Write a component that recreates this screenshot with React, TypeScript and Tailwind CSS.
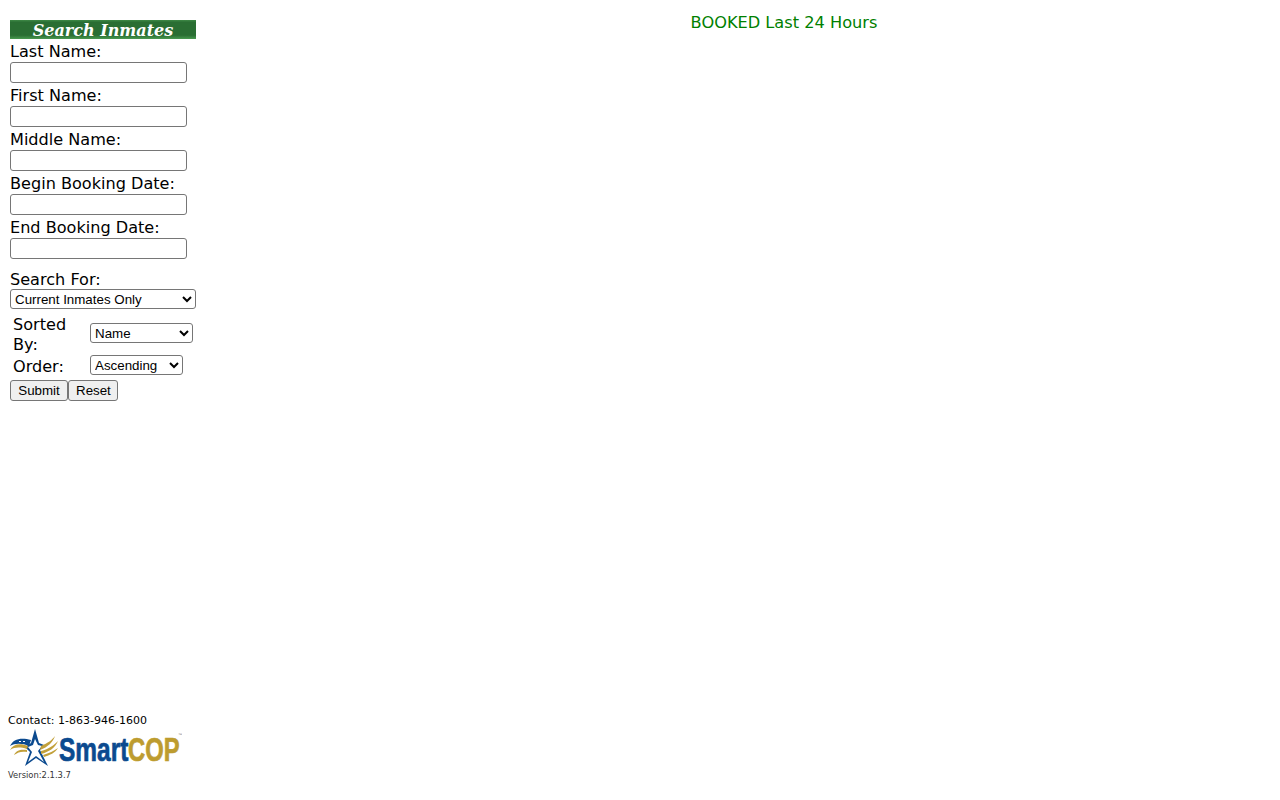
const labelCls = "block h-[22px] text-[16.1px] leading-[22px] text-black";
const inputCls = "block h-[21px] w-[177px] rounded-[3px] border border-[#767676] bg-white";
const selectCls = "block h-[20px] rounded-[3px] border border-[#767676] bg-white pl-0 text-[13.33px] text-black font-['Liberation_Sans',sans-serif]";
const btnCls = "h-[21px] rounded-[3px] border border-[#767676] bg-[#efefef] px-[7px] text-[13.33px] leading-[17px] text-black font-['Liberation_Sans',sans-serif]";

function Field({ label }: { label: string }) {
  return (
    <div className="h-[44px]">
      <label className={`${labelCls} translate-y-[1px]`}>{label}</label>
      <input type="text" className={inputCls} />
    </div>
  );
}

function Logo() {
  return (
    <svg width="174" height="40" viewBox="0 1 174 40" className="block">
      {/* star */}
      <path d="M27 1 L31 15 L36 17 L32 22 L40 38 L28 30 L17 38 L22 24 L17 19 L23 15 Z" fill="#0b4a8f" />
      <path d="M27 11 L30 17 L34 18 L30 23 L36 34 L28 28 L20 34 L24 24 L20 19 L25 17 Z" fill="#ffffff" />
      {/* left wing */}
      <path d="M2 18 C5 11 13 9 23 12 L21 18 C14 15 7 15 2 18 Z" fill="#0b4a8f" />
      <path d="M11 13.5 L13 13.5 M15 13.5 L17 13.5" stroke="#ffffff" strokeWidth="1.2" />
      <path d="M2 22 C5 16 12 15 20 18 L19 21 C12 19 7 19 2 22 Z" fill="#c2a03a" />
      <path d="M6 27 C8 22 13 21 19 22 L19 24 C14 23 10 24 6 27 Z" fill="#c2a03a" />
      {/* right wing */}
      <path d="M47 8 C45 14 40 19 32 22 L33 18 C40 15 44 12 47 8 Z" fill="#c2a03a" />
      <path d="M50 13 C47 20 41 24 33 26 L33 23 C41 21 46 17 50 13 Z" fill="#c2a03a" />
      <path d="M50 20 C47 25 42 27 36 29 L35 27 C41 25 46 23 50 20 Z" fill="#c2a03a" />
      {/* wordmark */}
      <g transform="translate(51 33) scale(0.72 1)">
        <text x="0" y="0" fontFamily="'Liberation Sans', sans-serif" fontWeight="700" fontSize="34" fill="#0b4a8f" stroke="#0b4a8f" strokeWidth="0.7">Smart</text>
      </g>
      <g transform="translate(120 33) scale(0.7 1)">
        <text x="0" y="0" fontFamily="'Liberation Sans', sans-serif" fontWeight="700" fontSize="34" fill="#bd9c2f" stroke="#bd9c2f" strokeWidth="0.7">COP</text>
      </g>
      <text x="170" y="8" fontFamily="'Liberation Sans', sans-serif" fontSize="4" fill="#777777">™</text>
    </svg>
  );
}

export default function App() {
  return (
    <div className="flex h-screen bg-white font-['DejaVu_Sans',Verdana,sans-serif]">
      <aside className="flex w-[196px] shrink-0 flex-col pb-[20px]">
        <div className="ml-[10px] mt-[20px] w-[186px]">
          <h1 className="h-[19px] bg-[linear-gradient(to_bottom,#3f8a47_0%,#2a6e33_12%,#2a6e33_80%,#4a9a50_100%)] text-center font-['DejaVu_Serif',serif] text-[16px] font-bold italic leading-[21px] text-white">
            Search Inmates
          </h1>
          <form>
            <div className="mt-[1px]">
              <Field label="Last Name:" />
              <Field label="First Name:" />
              <Field label="Middle Name:" />
              <Field label="Begin Booking Date:" />
              <Field label="End Booking Date:" />
            </div>
            <div className="mt-[9px]">
              <label className={labelCls}>Search For:</label>
              <select className={`${selectCls} -mt-[2px] w-[186px]`}>
                <option>Current Inmates Only</option>
              </select>
            </div>
            <div className="mt-[5px] flex h-[42px] items-center pl-[3px]">
              <span className="w-[77px] text-[16.1px] leading-[20px] text-black">Sorted By:</span>
              <select className={`${selectCls} -translate-y-[2px] w-[103px]`}>
                <option>Name</option>
              </select>
            </div>
            <div className="flex h-[22px] items-center pl-[3px]">
              <span className="w-[77px] text-[16.1px] leading-[20px] text-black">Order:</span>
              <select className={`${selectCls} -translate-y-[2px] w-[93px]`}>
                <option>Ascending</option>
              </select>
            </div>
            <div className="mt-[2px] flex">
              <button type="button" className={`${btnCls} w-[58px]`}>Submit</button>
              <button type="button" className={`${btnCls} w-[50px]`}>Reset</button>
            </div>
          </form>
        </div>
        <footer className="ml-[8px] mt-auto">
          <p className="mb-[1px] text-[11px] leading-[14px] text-black">Contact: 1-863-946-1600</p>
          <Logo />
          <p className="mt-[1px] text-[8.4px] leading-[10px] text-[#333333]">Version:2.1.3.7</p>
        </footer>
      </aside>
      <main className="flex-1 pt-[13px] pl-[92px] text-center text-[16.2px] leading-[20px] text-[#008000]">
        BOOKED Last 24 Hours
      </main>
    </div>
  );
}
